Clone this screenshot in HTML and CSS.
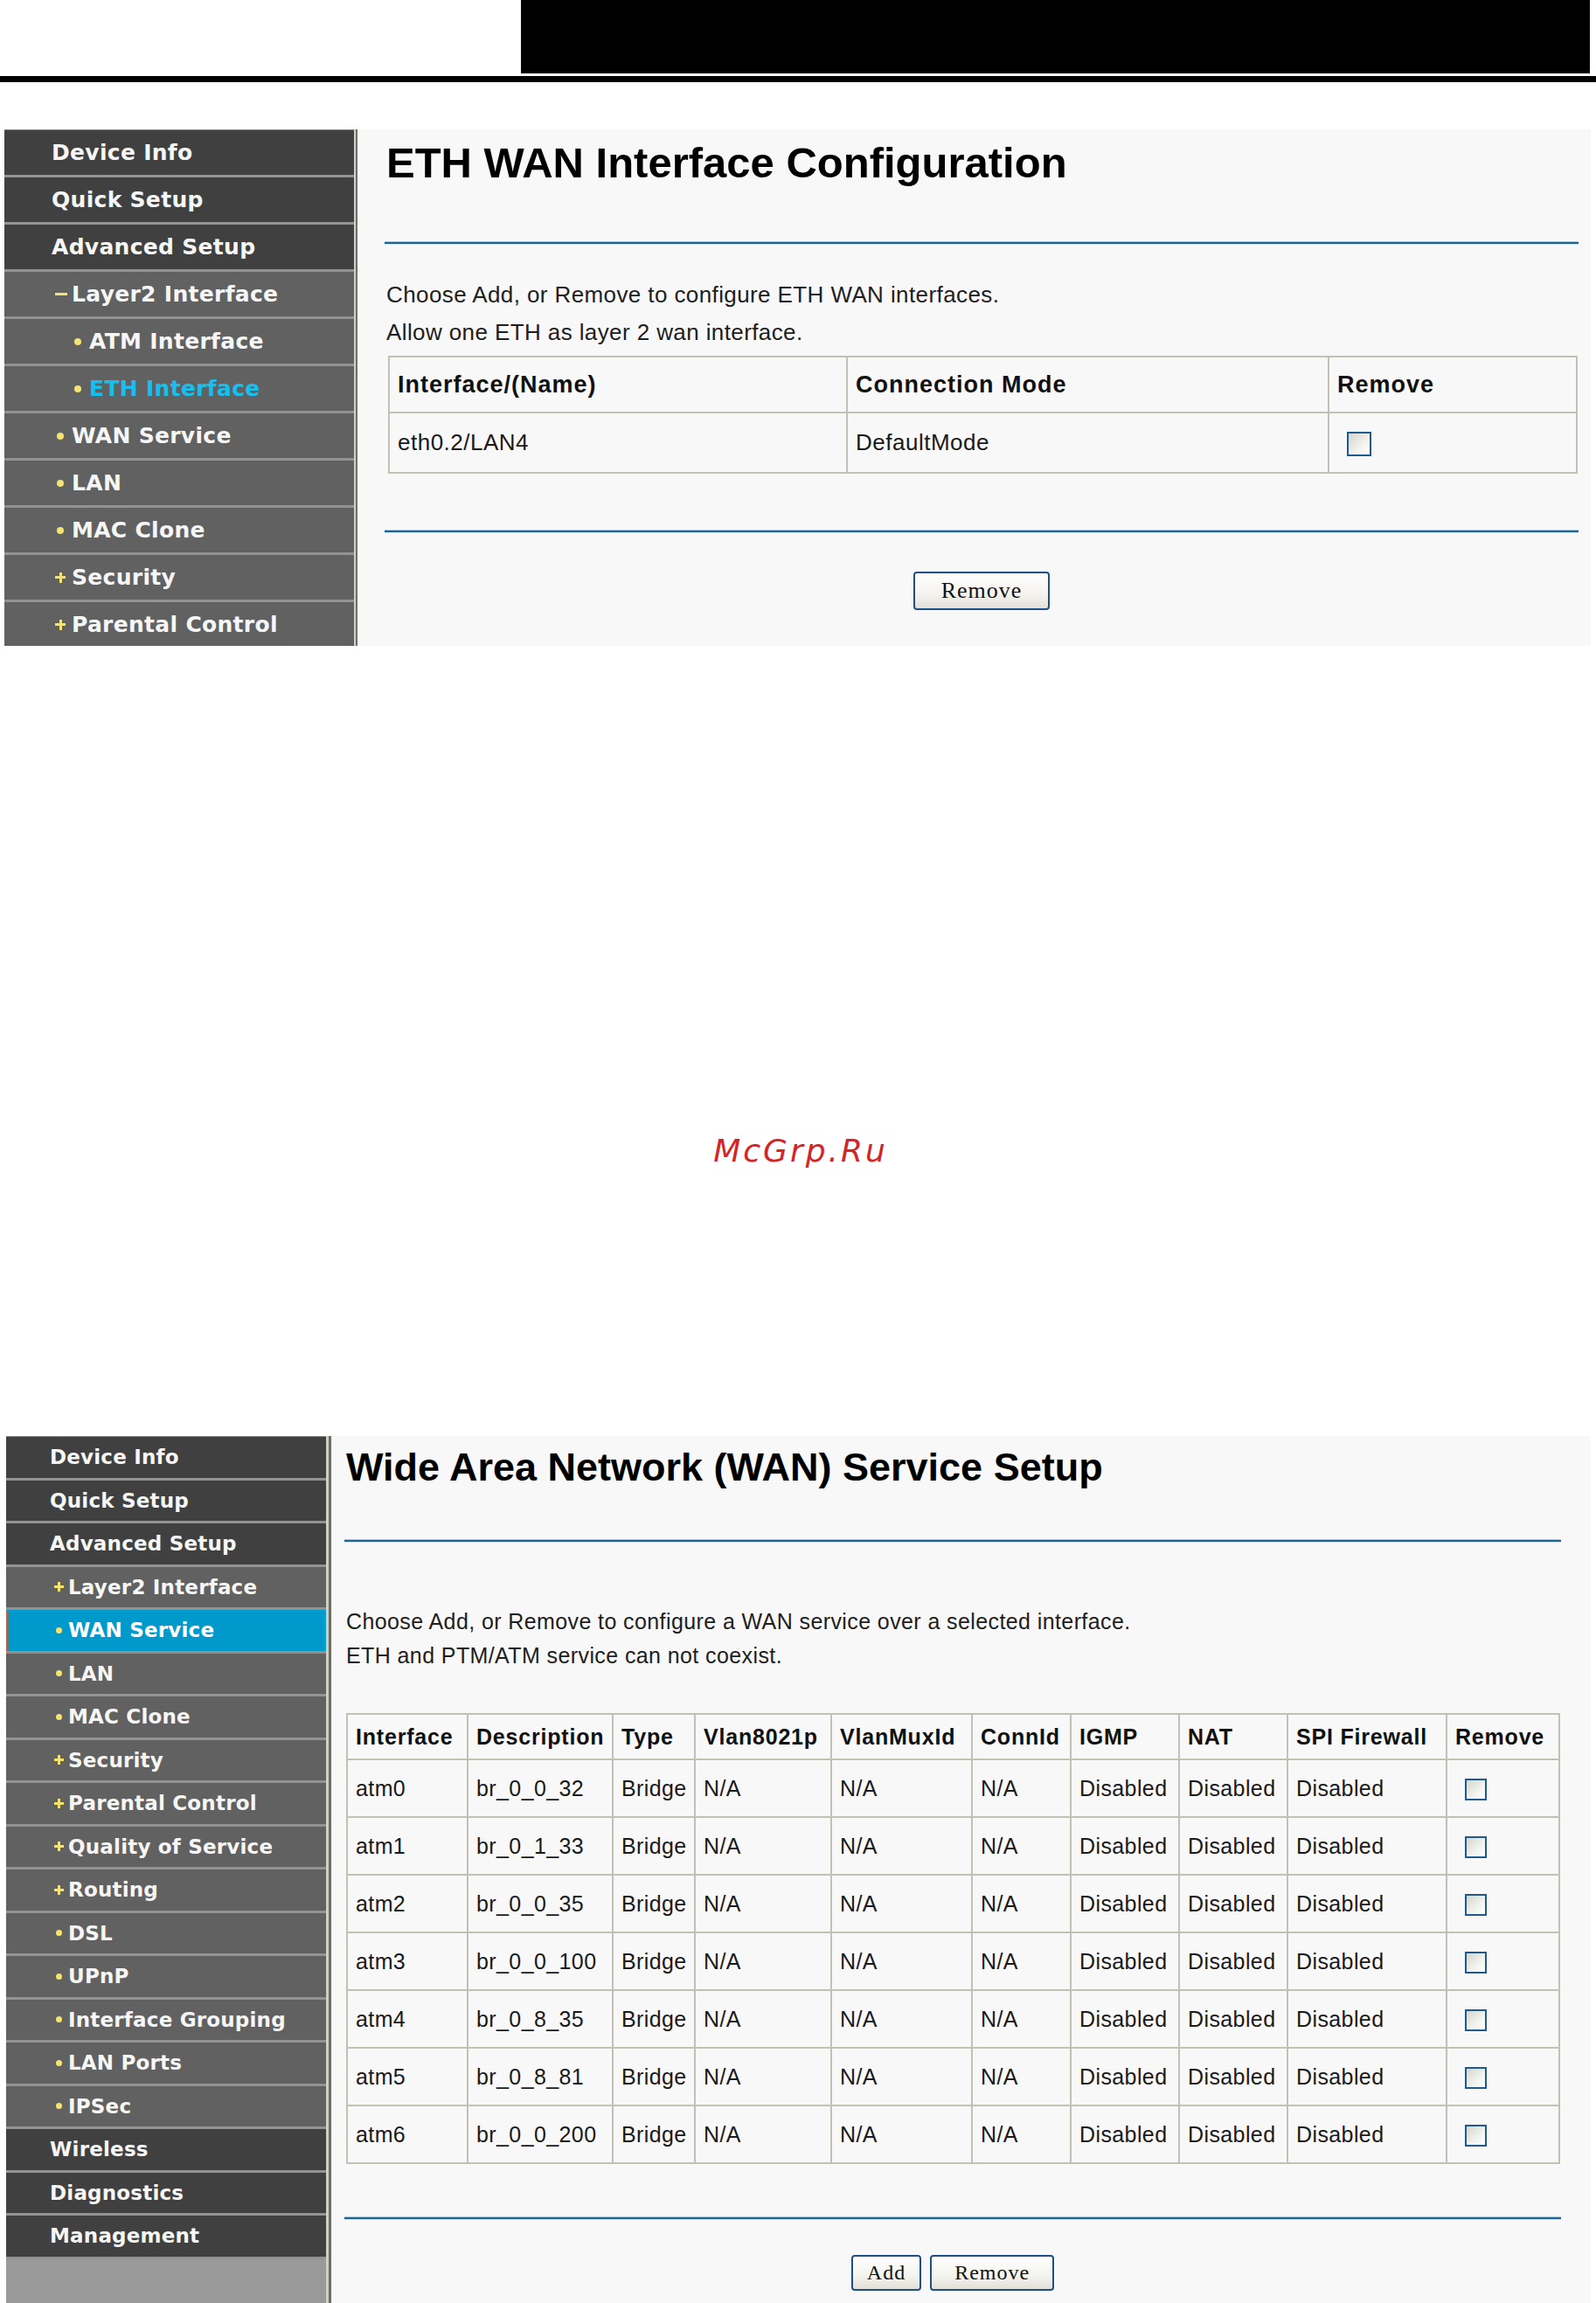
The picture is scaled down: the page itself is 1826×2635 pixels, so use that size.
FILE: index.html
```html
<!DOCTYPE html>
<html lang="en">
<head>
  <meta charset="UTF-8" />
  <title>ETH WAN Interface / WAN Service Setup</title>
  <link rel="stylesheet" href="styles.css">
</head>
<body>
  <div class="masthead"><div class="mast-black"></div></div>
  <div class="mast-rule"></div>

  <!-- screen 1: ETH interface -->
  <div class="shot shot-eth">
    <div class="menu">
      <div class="item l1">Device Info</div>
      <div class="item l1">Quick Setup</div>
      <div class="item l1">Advanced Setup</div>
      <div class="item l2"><span class="mk minus"></span>Layer2 Interface</div>
      <div class="item l3"><span class="mk dot"></span>ATM Interface</div>
      <div class="item l3 current"><span class="mk dot"></span>ETH Interface</div>
      <div class="item l2"><span class="mk dot"></span>WAN Service</div>
      <div class="item l2"><span class="mk dot"></span>LAN</div>
      <div class="item l2"><span class="mk dot"></span>MAC Clone</div>
      <div class="item l2"><span class="mk plus"></span>Security</div>
      <div class="item l2"><span class="mk plus"></span>Parental Control</div>
    </div>
    <div class="divider"></div>
    <div class="main">
      <h1>ETH WAN Interface Configuration</h1>
      <div class="rule"></div>
      <p class="intro">Choose Add, or Remove to configure ETH WAN interfaces.<br>Allow one ETH as layer 2 wan interface.</p>
      <table class="grid eth-grid">
        <colgroup><col><col><col></colgroup>
        <tr><th>Interface/(Name)</th><th>Connection Mode</th><th>Remove</th></tr>
        <tr><td>eth0.2/LAN4</td><td>DefaultMode</td><td><span class="chk"></span></td></tr>
      </table>
      <div class="rule rule-low"></div>
      <div class="actions"><button class="btn">Remove</button></div>
    </div>
  </div>

  <div class="mark">McGrp.Ru</div>

  <!-- screen 2: WAN service -->
  <div class="shot shot-wan">
    <div class="menu">
      <div class="item l1">Device Info</div>
      <div class="item l1">Quick Setup</div>
      <div class="item l1">Advanced Setup</div>
      <div class="item l2"><span class="mk plus"></span>Layer2 Interface</div>
      <div class="item l2 selected"><span class="mk dot"></span>WAN Service</div>
      <div class="item l2"><span class="mk dot"></span>LAN</div>
      <div class="item l2"><span class="mk dot"></span>MAC Clone</div>
      <div class="item l2"><span class="mk plus"></span>Security</div>
      <div class="item l2"><span class="mk plus"></span>Parental Control</div>
      <div class="item l2"><span class="mk plus"></span>Quality of Service</div>
      <div class="item l2"><span class="mk plus"></span>Routing</div>
      <div class="item l2"><span class="mk dot"></span>DSL</div>
      <div class="item l2"><span class="mk dot"></span>UPnP</div>
      <div class="item l2"><span class="mk dot"></span>Interface Grouping</div>
      <div class="item l2"><span class="mk dot"></span>LAN Ports</div>
      <div class="item l2"><span class="mk dot"></span>IPSec</div>
      <div class="item l1">Wireless</div>
      <div class="item l1">Diagnostics</div>
      <div class="item l1">Management</div>
      <div class="menu-fill"></div>
    </div>
    <div class="divider"></div>
    <div class="main">
      <h1>Wide Area Network (WAN) Service Setup</h1>
      <div class="rule"></div>
      <p class="intro">Choose Add, or Remove to configure a WAN service over a selected interface.<br>ETH and PTM/ATM service can not coexist.</p>
      <table class="grid wan-grid">
        <colgroup><col><col><col><col><col><col><col><col><col><col></colgroup>
        <tr>
          <th>Interface</th><th>Description</th><th>Type</th><th>Vlan8021p</th><th>VlanMuxId</th>
          <th>ConnId</th><th>IGMP</th><th>NAT</th><th>SPI Firewall</th><th>Remove</th>
        </tr>
        <tr><td>atm0</td><td>br_0_0_32</td><td>Bridge</td><td>N/A</td><td>N/A</td><td>N/A</td><td>Disabled</td><td>Disabled</td><td>Disabled</td><td><span class="chk"></span></td></tr>
        <tr><td>atm1</td><td>br_0_1_33</td><td>Bridge</td><td>N/A</td><td>N/A</td><td>N/A</td><td>Disabled</td><td>Disabled</td><td>Disabled</td><td><span class="chk"></span></td></tr>
        <tr><td>atm2</td><td>br_0_0_35</td><td>Bridge</td><td>N/A</td><td>N/A</td><td>N/A</td><td>Disabled</td><td>Disabled</td><td>Disabled</td><td><span class="chk"></span></td></tr>
        <tr><td>atm3</td><td>br_0_0_100</td><td>Bridge</td><td>N/A</td><td>N/A</td><td>N/A</td><td>Disabled</td><td>Disabled</td><td>Disabled</td><td><span class="chk"></span></td></tr>
        <tr><td>atm4</td><td>br_0_8_35</td><td>Bridge</td><td>N/A</td><td>N/A</td><td>N/A</td><td>Disabled</td><td>Disabled</td><td>Disabled</td><td><span class="chk"></span></td></tr>
        <tr><td>atm5</td><td>br_0_8_81</td><td>Bridge</td><td>N/A</td><td>N/A</td><td>N/A</td><td>Disabled</td><td>Disabled</td><td>Disabled</td><td><span class="chk"></span></td></tr>
        <tr><td>atm6</td><td>br_0_0_200</td><td>Bridge</td><td>N/A</td><td>N/A</td><td>N/A</td><td>Disabled</td><td>Disabled</td><td>Disabled</td><td><span class="chk"></span></td></tr>
      </table>
      <div class="rule rule-low"></div>
      <div class="actions"><button class="btn btn-add">Add</button><button class="btn">Remove</button></div>
    </div>
  </div>
</body>
</html>
```

FILE: styles.css
```css
body {
  margin: 0;
  background: #fff;
  font-family: 'Liberation Sans', Arial, sans-serif;
  color: #1a1a1a;
}

/* page header */
.masthead {
  height: 84px;
}

.mast-black {
  margin-left: 596px;
  width: 1223px;
  height: 84px;
  background: #000;
}

.mast-rule {
  margin-top: 3px;
  height: 7px;
  background: #000;
}

/* screenshot frames */
.shot {
  display: flex;
  background: #f8f8f8;
  overflow: hidden;
}

.shot-eth {
  margin: 54px 0 0 5px;
  width: 1815px;
  height: 591px;
}

.shot-wan {
  margin: 304px 0 0 7px;
  width: 1813px;
  height: 992px;
}

/* left menu */
.menu {
  display: flex;
  flex-direction: column;
  flex-shrink: 0;
  background: #616161;
  border-top: 1px solid #8c8c8c;
}

.shot-eth .menu { width: 400px; }
.shot-wan .menu { width: 366px; }

.item {
  display: flex;
  align-items: center;
  box-sizing: border-box;
  flex-shrink: 0;
  background: #616161;
  border-bottom: 3px solid #939393;
  color: #f6f6f6;
  font-family: 'DejaVu Sans', Verdana, sans-serif;
  font-weight: bold;
  white-space: nowrap;
}

.item.l1 { background: #404040; }

.shot-eth .item {
  height: 54px;
  font-size: 25px;
  letter-spacing: 0.3px;
}
.shot-eth .l1 { padding-left: 54px; }
.shot-eth .l2 { padding-left: 58px; }
.shot-eth .l3 { padding-left: 78px; }

.shot-wan .item {
  height: 49.5px;
  font-size: 23px;
  letter-spacing: 0.2px;
}
.shot-wan .l1 { padding-left: 50px; }
.shot-wan .l2 { padding-left: 55px; }

.item.current { color: #17bfee; }

.item.selected {
  background: #0099cc;
  color: #fff;
  outline: 1px dotted #d2683a;
  outline-offset: -2px;
}

.menu-fill {
  flex: 1;
  background: #9a9a9a;
}

/* yellow markers */
.mk {
  display: inline-block;
  flex-shrink: 0;
}

.dot {
  width: 8px;
  height: 8px;
  margin: 0 9px 0 2px;
  border-radius: 50%;
  background: #f4e272;
}

.plus {
  width: 12px;
  height: 12px;
  margin-right: 7px;
  background:
    linear-gradient(#f4e272, #f4e272) center / 12px 3px no-repeat,
    linear-gradient(#f4e272, #f4e272) center / 3px 12px no-repeat;
}

.minus {
  width: 14px;
  height: 3px;
  margin-right: 5px;
  background: #f4e272;
}

.shot-wan .dot {
  width: 7px;
  height: 7px;
  margin: 0 7px 0 2px;
}

.shot-wan .plus {
  width: 11px;
  height: 11px;
  margin-right: 5px;
  background-size: 11px 3px, 3px 11px;
}

.divider {
  flex-shrink: 0;
  background: linear-gradient(to right, #cfcfc8 0 40%, #6e6e62 40% 80%, #f2f2f2 80%);
}

.shot-eth .divider { width: 5px; }
.shot-wan .divider { width: 7px; }

/* content */
.main {
  flex: 1;
  box-sizing: border-box;
}

.shot-eth .main { padding: 0 14px 0 30px; }
.shot-wan .main { padding: 0 34px 0 14px; }

h1 {
  margin: 0;
  font-weight: bold;
  color: #000;
  white-space: nowrap;
}

.shot-eth h1 {
  margin: 9px 0 0 2px;
  font-size: 49px;
  line-height: 58px;
}

.shot-wan h1 {
  margin: 9px 0 0 2px;
  font-size: 45px;
  line-height: 53px;
}

.rule {
  height: 4px;
  background: linear-gradient(#a8c7db 0 25%, #1f6393 25% 70%, #cfe0ea 70%);
}

.shot-eth .rule { margin-top: 61px; }
.shot-eth .rule-low { margin-top: 64px; }
.shot-wan .rule { margin-top: 56px; }
.shot-wan .rule-low { margin-top: 60px; }

.intro {
  margin: 0;
  color: #1e1e1e;
}

.shot-eth .intro {
  margin: 36px 0 0 2px;
  font-size: 26px;
  line-height: 43px;
  letter-spacing: 0.4px;
}

.shot-wan .intro {
  margin: 71px 0 0 2px;
  font-size: 25px;
  line-height: 39px;
  letter-spacing: 0.4px;
}

/* tables */
.grid {
  border-collapse: collapse;
  table-layout: fixed;
  border: 2px solid #b6b3a7;
}

.grid th,
.grid td {
  border: 2px solid #c3c0b5;
  text-align: left;
  vertical-align: middle;
  white-space: nowrap;
  overflow: hidden;
}

.grid th {
  font-weight: bold;
  color: #111;
}

.eth-grid {
  margin: 5px 0 0 4px;
  width: 1359px;
}
.eth-grid col:nth-child(1) { width: 524px; }
.eth-grid col:nth-child(2) { width: 551px; }
.eth-grid col:nth-child(3) { width: 284px; }
.eth-grid th {
  height: 62px;
  padding: 0 0 0 9px;
  font-size: 27px;
  letter-spacing: 1px;
}
.eth-grid td {
  height: 67px;
  padding: 0 0 0 9px;
  font-size: 26px;
  letter-spacing: 0.5px;
}

.wan-grid {
  margin: 46px 0 0 2px;
  width: 1388px;
}
.wan-grid col:nth-child(1) { width: 138px; }
.wan-grid col:nth-child(2) { width: 166px; }
.wan-grid col:nth-child(3) { width: 94px; }
.wan-grid col:nth-child(4) { width: 156px; }
.wan-grid col:nth-child(5) { width: 161px; }
.wan-grid col:nth-child(6) { width: 113px; }
.wan-grid col:nth-child(7) { width: 124px; }
.wan-grid col:nth-child(8) { width: 124px; }
.wan-grid col:nth-child(9) { width: 182px; }
.wan-grid col:nth-child(10) { width: 129px; }
.wan-grid th {
  height: 50px;
  padding: 0 0 0 9px;
  font-size: 25px;
  letter-spacing: 0.8px;
}
.wan-grid td {
  height: 64px;
  padding: 0 0 0 9px;
  font-size: 25px;
  letter-spacing: 0.4px;
}

.chk {
  display: inline-block;
  box-sizing: border-box;
  vertical-align: middle;
  border: 2px solid #1f5a8e;
  background: linear-gradient(135deg, #d6d6d0, #f2f2ee 60%, #fff);
}

.eth-grid .chk {
  width: 28px;
  height: 28px;
  margin-left: 11px;
}

.wan-grid .chk {
  width: 25px;
  height: 25px;
  margin-left: 11px;
}

/* buttons */
.actions {
  display: flex;
  justify-content: center;
  gap: 10px;
}

.shot-eth .actions { margin-top: 44px; }
.shot-wan .actions { margin-top: 40px; }

.btn {
  box-sizing: border-box;
  border: 2px solid #1e4f86;
  border-radius: 4px;
  background: linear-gradient(#ffffff, #f4f3ee 60%, #e2e0d6);
  color: #111;
  font-family: 'Liberation Serif', 'Times New Roman', serif;
  letter-spacing: 1px;
  cursor: pointer;
}

.shot-eth .btn {
  height: 44px;
  padding: 0 30px;
  font-size: 26px;
}

.shot-wan .btn {
  height: 41px;
  padding: 0 26px;
  font-size: 24px;
}

.shot-wan .btn-add { padding: 0 16px; }

/* watermark */
.mark {
  margin: 556px 0 0 6px;
  text-align: center;
  font-family: 'DejaVu Sans', sans-serif;
  font-style: italic;
  font-size: 36px;
  line-height: 44px;
  letter-spacing: 3px;
  color: #d42424;
}
```
